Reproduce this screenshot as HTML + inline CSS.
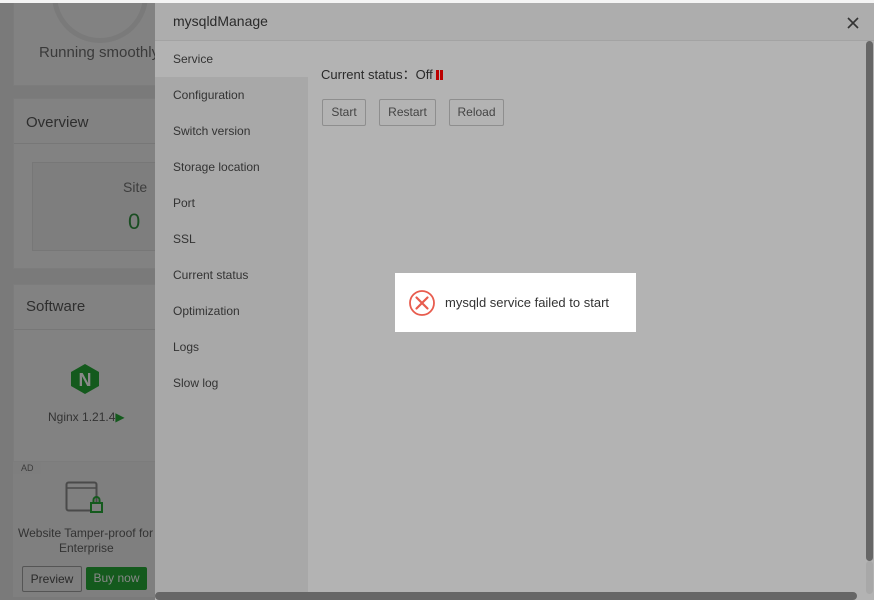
<!DOCTYPE html>
<html><head><meta charset="utf-8"><style>
*{box-sizing:border-box;margin:0;padding:0}
body{width:874px;height:600px;overflow:hidden;background:#7a7a7a;font-family:"Liberation Sans",sans-serif;position:relative}
.abs{position:absolute}
.card{position:absolute;background:#828282;border:1px solid #7c7c7c}
.t{position:absolute;white-space:nowrap}
.side div{height:36px;line-height:36px;padding-left:18px;font-size:12px;color:#333}
.btn{position:absolute;top:96px;height:27px;border:1px solid #8e8e8e;border-radius:2px;font-size:12px;color:#444;line-height:25px;text-align:center}
</style></head><body>
<!-- left background cards -->
<div class="card" style="left:13px;top:-2px;width:150px;height:88px">
  <div class="abs" style="left:38px;top:-52px;width:96px;height:96px;border:5px solid #7a7a7a;border-radius:50%"></div>
  <div class="t" style="left:25px;top:45px;font-size:15px;color:#3a3a3a">Running smoothly</div>
</div>
<div class="card" style="left:13px;top:98px;width:150px;height:171px">
  <div class="t" style="left:12px;top:15px;font-size:15px;color:#2e2e2e">Overview</div>
  <div class="abs" style="left:0;top:44px;width:150px;height:1px;background:#777"></div>
  <div class="abs" style="left:18px;top:63px;width:140px;height:89px;border:1px solid #777;background:#7e7e7e"></div>
  <div class="t" style="left:109px;top:80px;font-size:14px;color:#3d3d3d">Site</div>
  <div class="t" style="left:114px;top:110px;font-size:22px;color:#1a4d22">0</div>
</div>
<div class="card" style="left:13px;top:284px;width:150px;height:178px">
  <div class="t" style="left:12px;top:13px;font-size:15px;color:#2e2e2e">Software</div>
  <div class="abs" style="left:0;top:44px;width:150px;height:1px;background:#777"></div>
  <svg class="abs" style="left:56px;top:78px" width="30" height="32" viewBox="0 0 30 32"><polygon points="15,1 29,9 29,23 15,31 1,23 1,9" fill="#145a1d"/><text x="15" y="23" font-size="18" font-weight="bold" fill="#8a8a8a" text-anchor="middle" font-family="Liberation Sans">N</text></svg>
  <div class="t" style="left:34px;top:125px;font-size:12px;color:#333">Nginx 1.21.4<span style="color:#145a1d">▶</span></div>
</div>
<div class="card" style="left:13px;top:462px;width:150px;height:135px;border:none;background:#7f7f7f">
  <svg class="abs" style="left:52px;top:19px" width="40" height="34"><rect x="1.5" y="1.5" width="30" height="28" rx="2" fill="none" stroke="#4a4a4a" stroke-width="2"/><line x1="2" y1="7" x2="31" y2="7" stroke="#4a4a4a" stroke-width="1.5"/><rect x="26" y="22" width="11" height="9" fill="#7f7f7f" stroke="#145a1d" stroke-width="2"/><path d="M28.5 22v-3a3 3 0 0 1 6 0v3" fill="none" stroke="#145a1d" stroke-width="2"/></svg>
  <div class="t" style="left:5px;top:64px;font-size:12px;color:#333">Website Tamper-proof for</div>
  <div class="t" style="left:46px;top:79px;font-size:12px;color:#333">Enterprise</div>
  <div class="abs" style="left:9px;top:104px;width:60px;height:26px;border:1px solid #555;border-radius:2px;font-size:12px;color:#2a2a2a;text-align:center;line-height:24px">Preview</div>
  <div class="abs" style="left:73px;top:105px;width:61px;height:23px;background:#145a1d;border-radius:2px;font-size:12px;color:#888;text-align:center;line-height:23px">Buy now</div>
</div>
<div class="abs" style="left:13px;top:462px;width:28px;height:12px;background:#7e7e7e;font-size:9px;color:#3d3d3d;padding-left:8px;line-height:12px">AD</div>
<div class="abs" style="left:0;top:0;width:874px;height:3px;background:#f4f4f4"></div>
<!-- dialog -->
<div class="abs" style="left:155px;top:3px;width:719px;height:597px;background:#b3b3b3">
  <div class="abs" style="left:0;top:0;width:719px;height:38px;background:#adadad;border-bottom:1px solid #a3a3a3"></div>
  <div class="t" style="left:18px;top:10px;font-size:14px;color:#2a2a2a">mysqldManage</div>
  <svg class="abs" style="left:692px;top:14px" width="12" height="12"><path d="M1 1L11 11M11 1L1 11" stroke="#333" stroke-width="1.6"/></svg>
  <div class="abs side" style="left:0;top:38px;width:153px;height:552px;background:#a8a8a8">
    <div style="background:#b3b3b3">Service</div><div>Configuration</div><div>Switch version</div><div>Storage location</div><div>Port</div><div>SSL</div><div>Current status</div><div>Optimization</div><div>Logs</div><div>Slow log</div>
  </div>
  <div class="t" style="left:166px;top:61px;font-size:13px;color:#2a2a2a">Current status：Off <span style="display:inline-block;width:7px;height:10px;border-left:3px solid #b00;border-right:3px solid #b00;vertical-align:-1px"></span></div>
  <div class="btn" style="left:167px;width:44px">Start</div>
  <div class="btn" style="left:224px;width:57px">Restart</div>
  <div class="btn" style="left:294px;width:55px">Reload</div>
  <div class="abs" style="left:711px;top:38px;width:7px;height:520px;background:#666;border-radius:4px"></div>
  <div class="abs" style="left:711px;top:558px;width:7px;height:33px;background:#a8a8a8;border-radius:4px"></div>
  <div class="abs" style="left:0;top:589px;width:702px;height:8px;background:#666;border-radius:4px"></div>
</div>
<!-- toast -->
<div class="abs" style="left:395px;top:273px;width:241px;height:59px;background:#fff">
  <svg class="abs" style="left:13px;top:16px" width="28" height="28" viewBox="0 0 28 28"><circle cx="14" cy="14" r="12" fill="none" stroke="#e85c4e" stroke-width="1.8"/><path d="M8.5 8.5L19.5 19.5M19.5 8.5L8.5 19.5" stroke="#e85c4e" stroke-width="2.2" stroke-linecap="round"/></svg>
  <div class="t" style="left:50px;top:22px;font-size:13px;color:#333">mysqld service failed to start</div>
</div>
</body></html>
